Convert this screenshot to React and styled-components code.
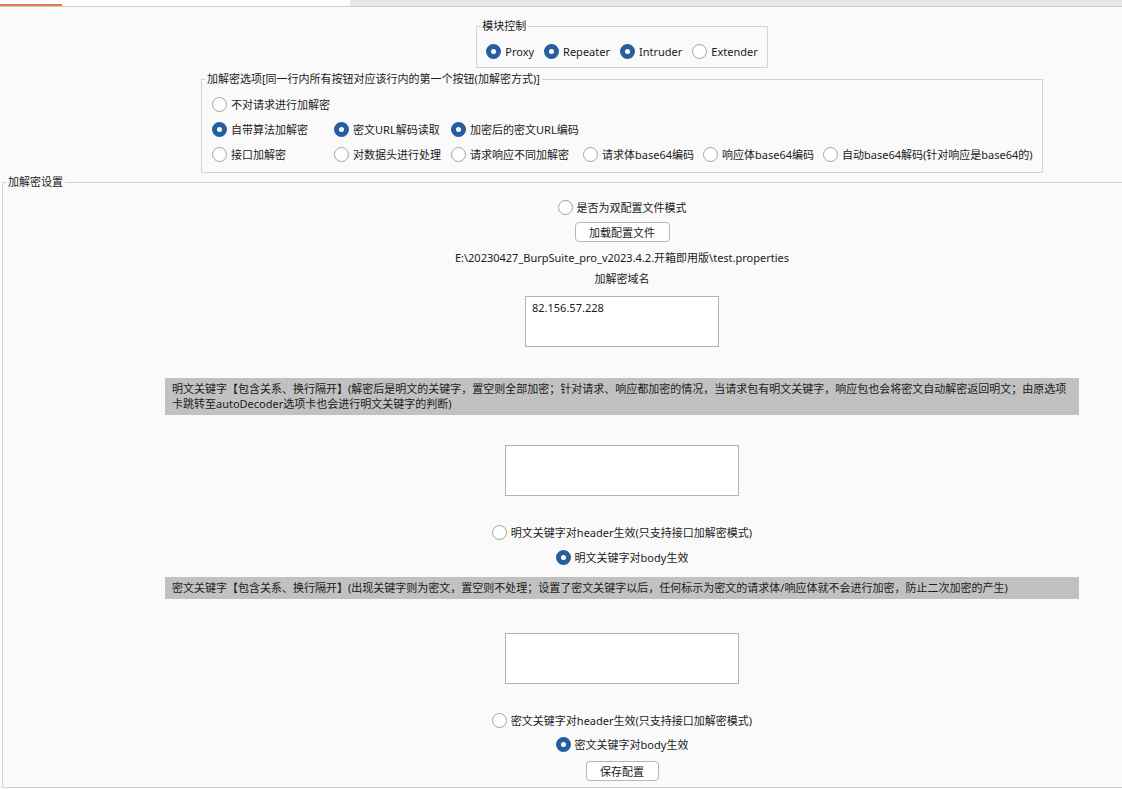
import React from "react";
import styled, { createGlobalStyle } from "styled-components";

const GlobalStyle = createGlobalStyle`
	html, body {
		margin: 0;
		padding: 0;
		overflow: hidden;
		background: #fafafa;
	}
	body {
		font-family: "Noto Sans", "Noto Sans CJK SC", sans-serif;
		font-size: 11px;
		line-height: 15px;
		color: #1b1b1b;
	}
`;

const optionRows = [
	[{ label: "不对请求进行加解密" }],
	[
		{ label: "自带算法加解密", on: true },
		{ label: "密文URL解码读取", on: true },
		{ label: "加密后的密文URL编码", on: true },
	],
	[
		{ label: "接口加解密" },
		{ label: "对数据头进行处理" },
		{ label: "请求响应不同加解密" },
		{ label: "请求体base64编码" },
		{ label: "响应体base64编码" },
		{ label: "自动base64解码(针对响应是base64的)" },
	],
];

const modules = [
	{ label: "Proxy", on: true },
	{ label: "Repeater", on: true },
	{ label: "Intruder", on: true },
	{ label: "Extender" },
];

function Radio({ on, children }) {
	return (
		<RadioLabel>
			<Dot $on={on} />
			<span>{children}</span>
		</RadioLabel>
	);
}

export default function App() {
	return (
		<Page>
			<GlobalStyle />
			<TabBar>
				<Tab $w={62} $active />
				<Tab $w={100} />
				<Tab $w={97} />
				<Tab $w={91} />
				<TabFill />
			</TabBar>

			<ModuleBox>
				<Legend>模块控制</Legend>
				<ModuleRow>
					{modules.map((m) => (
						<Radio key={m.label} on={m.on}>
							{m.label}
						</Radio>
					))}
				</ModuleRow>
			</ModuleBox>

			<OptionsBox>
				<Legend>加解密选项[同一行内所有按钮对应该行内的第一个按钮(加解密方式)]</Legend>
				<OptionsGrid>
					{optionRows.map((row, i) =>
						row.map((o, j) => (
							<Cell key={i + "-" + j} $row={i + 1}>
								<Radio on={o.on}>{o.label}</Radio>
							</Cell>
						))
					)}
				</OptionsGrid>
			</OptionsBox>

			<SettingsBox>
				<Legend>加解密设置</Legend>
				<Column>
					<Item $mt={10}>
						<Radio>是否为双配置文件模式</Radio>
					</Item>
					<Button $w={95} $mt={7}>加载配置文件</Button>
					<Text $mt={8}>E:\20230427_BurpSuite_pro_v2023.4.2.开箱即用版\test.properties</Text>
					<Text $mt={6}>加解密域名</Text>
					<Area $w={194} $mt={10} readOnly defaultValue="82.156.57.228" />

					<Note $mt={31}>
						明文关键字【包含关系、换行隔开】(解密后是明文的关键字，置空则全部加密；针对请求、响应都加密的情况，当请求包有明文关键字，响应包也会将密文自动解密返回明文；由原选项
						<br />
						卡跳转至autoDecoder选项卡也会进行明文关键字的判断)
					</Note>
					<Area $w={234} $mt={30} readOnly defaultValue="" />
					<Item $mt={28}>
						<Radio>明文关键字对header生效(只支持接口加解密模式)</Radio>
					</Item>
					<Item $mt={9}>
						<Radio on>明文关键字对body生效</Radio>
					</Item>

					<Note $mt={12}>
						密文关键字【包含关系、换行隔开】(出现关键字则为密文，置空则不处理；设置了密文关键字以后，任何标示为密文的请求体/响应体就不会进行加密，防止二次加密的产生)
					</Note>
					<Area $w={234} $mt={34} readOnly defaultValue="" />
					<Item $mt={28}>
						<Radio>密文关键字对header生效(只支持接口加解密模式)</Radio>
					</Item>
					<Item $mt={8}>
						<Radio on>密文关键字对body生效</Radio>
					</Item>
					<Button $w={73} $mt={9}>保存配置</Button>
				</Column>
			</SettingsBox>
		</Page>
	);
}

const Page = styled.div`
	width: 1244px;
	background: #fafafa;
	display: flex;
	flex-direction: column;
	align-items: center;

	& > * {
		flex-shrink: 0;
	}
`;

const TabBar = styled.div`
	align-self: stretch;
	display: flex;
	height: 6px;
	border-bottom: 1px solid #cdcdcd;
	background: #ffffff;
`;

const Tab = styled.div`
	width: ${(p) => p.$w}px;
	box-sizing: border-box;
	border-bottom: 2px solid ${(p) => (p.$active ? "#e07a4c" : "transparent")};
`;

const TabFill = styled.div`
	flex: 1;
	background: #e8e8e8;
`;

const Fieldset = styled.fieldset`
	margin: 0;
	padding: 0;
	border: 1px solid #d3d3d3;
	box-sizing: border-box;
	min-inline-size: 0;
`;

const Legend = styled.legend`
	margin-left: 3px;
	padding: 0 2px;
	line-height: 14px;
	height: 14px;
	white-space: nowrap;
`;

const ModuleBox = styled(Fieldset)`
	margin-top: 12px;
`;

const ModuleRow = styled.div`
	display: flex;
	gap: 10px;
	padding: 10px 9px 8px;
`;

const OptionsBox = styled(Fieldset)`
	width: 842px;
	margin-top: 4px;
`;

const OptionsGrid = styled.div`
	display: grid;
	grid-template-columns: 122px 117px 132px 120px 120px auto;
	row-gap: 9px;
	padding: 10px 0 10px 10px;
`;

const Cell = styled.div`
	grid-row: ${(p) => p.$row};
	display: flex;
	white-space: nowrap;
`;

const SettingsBox = styled(Fieldset)`
	align-self: stretch;
	margin: 2px 2px 0;
	height: 613px;
`;

const Column = styled.div`
	display: flex;
	flex-direction: column;
	align-items: center;
`;

const Item = styled.div`
	display: flex;
	margin-top: ${(p) => p.$mt}px;
`;

const RadioLabel = styled.label`
	display: flex;
	align-items: center;
	gap: 4px;
	height: 16px;
	white-space: nowrap;
`;

const Dot = styled.span`
	width: 15px;
	height: 15px;
	box-sizing: border-box;
	border-radius: 50%;
	background: #ffffff;
	border: ${(p) => (p.$on ? "5px solid #255f9e" : "1px solid #a2a2a2")};
	flex: none;
`;

const Button = styled.button`
	display: block;
	margin-top: ${(p) => p.$mt}px;
	width: ${(p) => p.$w}px;
	height: 20px;
	padding: 0;
	font: inherit;
	color: #1b1b1b;
	background: #ffffff;
	border: 1px solid #b5b5b5;
	border-radius: 4px;
`;

const Text = styled.div`
	margin-top: ${(p) => p.$mt}px;
	height: 15px;
	white-space: nowrap;
`;

const Area = styled.textarea`
	display: block;
	margin-top: ${(p) => p.$mt}px;
	width: ${(p) => p.$w}px;
	height: 51px;
	box-sizing: border-box;
	padding: 3px 6px;
	font: inherit;
	color: #1b1b1b;
	background: #ffffff;
	border: 1px solid #b2b2b2;
	border-radius: 0;
	resize: none;
	outline: none;
`;

const Note = styled.div`
	margin-top: ${(p) => p.$mt}px;
	width: 914px;
	box-sizing: border-box;
	padding: 3px 7px 4px;
	background: #c1c1c1;
	white-space: nowrap;
`;
